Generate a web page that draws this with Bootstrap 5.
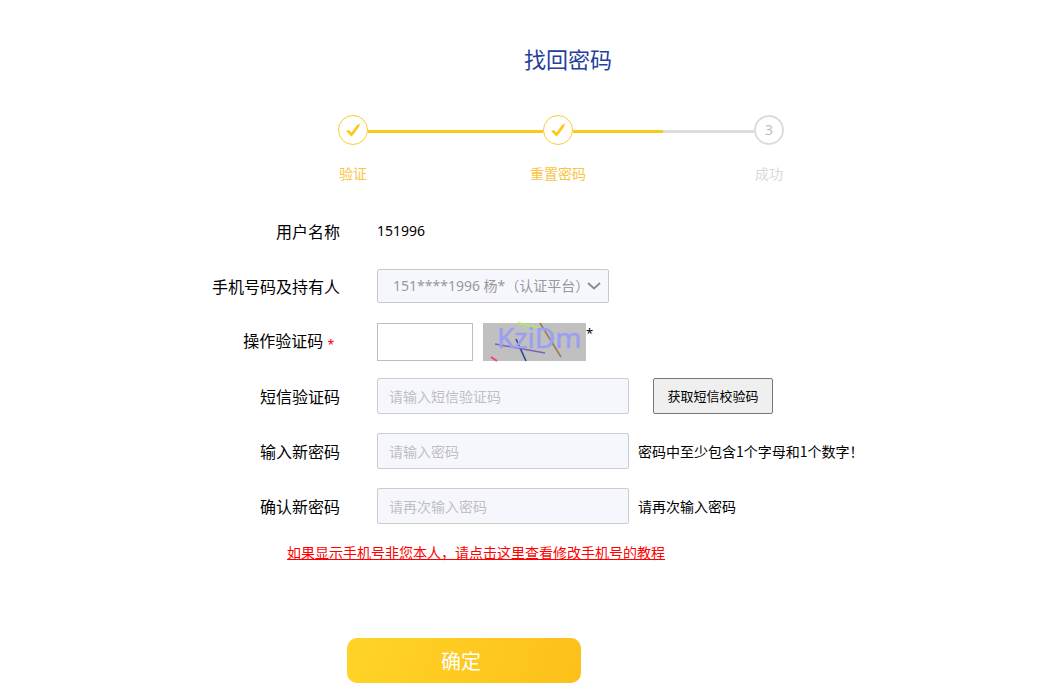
<!DOCTYPE html>
<html lang="zh-CN">
<head>
<meta charset="utf-8">
<meta name="viewport" content="width=device-width, initial-scale=1">
<title>找回密码</title>
<link href="https://cdn.jsdelivr.net/npm/bootstrap@5.3.0/dist/css/bootstrap.min.css" rel="stylesheet">
<style>
  body { font-family: "Noto Sans", "Noto Sans CJK SC", sans-serif; font-size: 14px; line-height: 20px; color: #000; background: #fff; }
  .page { padding-left: 81px; }
  .recover { max-width: 714px; }
  .recover h1 { padding-top: 42px; font-size: 22px; line-height: 32px; font-weight: 400; color: #25409c; }
  .cjk { font-family: "Noto Sans CJK SC", sans-serif; font-weight: 400; }
  /* progress steps */
  .steps { width: 446px; margin: 41px 0 0 127px; }
  .step { width: 30px; color: #fac443; }
  .step-label { margin-top: 18px; }
  .step-dot { width: 30px; height: 30px; border: 1px solid #fccb2e; }
  .step.todo { color: #d8d8d8; }
  .step.todo .step-dot { border: 2px solid #dcdcdc; color: #bfbfbf; }
  .step-line { height: 3px; margin-top: 15px; background: #fdc918; }
  .line-a { flex: 29 1 0; }
  .line-b { flex: 30 1 0; background: linear-gradient(to right, #fdc918 50%, #dcdcdc 50%); }
  /* form */
  .form-rows { margin-top: 20px; }
  .form-line { min-height: 55px; }
  .line-label { width: 129px; margin-right: 37px; font-size: 16px; line-height: 24px; }
  .required { padding: 0 6px 0 1px; font: 16px/20px "Liberation Sans", sans-serif; color: #f00; vertical-align: -4px; }
  .captcha-line { padding-top: 2px; }
  .field { width: 252px; height: 36px; padding: 0 11px; font-size: 14px; border: 1px solid #ccc; border-radius: 2px; background: #f6f7fd; }
  .field::placeholder { color: #bfbfbf; opacity: 1; }
  .phone { width: 232px; height: 34px; padding: 0 24px 0 15px; font-size: 14px; line-height: 20px; border: 1px solid #c8c8cd; border-radius: 2px; opacity: 1;
    background-image: url("data:image/svg+xml,%3Csvg xmlns='http://www.w3.org/2000/svg' viewBox='0 0 14 8'%3E%3Cpath d='M1 1l6 5.5 6-5.5' fill='none' stroke='%238c8c8c' stroke-width='2'/%3E%3C/svg%3E"); background-size: 14px 8px; background-position: right 7px center; }
  .phone:disabled { background-color: #f6f7fd; color: #999; }
  .captcha-field { width: 96px; height: 38px; border: 1px solid #bdbdbd; border-radius: 0; }
  .captcha-btn { margin-left: 10px; line-height: 0; }
  .captcha-note { padding-top: 8px; font-size: 13px; }
  .sms { width: 120px; height: 36px; margin-left: 24px; font-size: 13px; line-height: 20px; color: #000; background: #efefef; border: 1px solid #767676; border-radius: 2px; }
  .hint { margin-left: 9px; }
  .guide { margin: 9px 0 0 76px; color: #f00; }
  .guide:hover { color: #c00; }
  .confirm { width: 234px; height: 45px; margin: 75px 0 6px 136px; padding: 0 6px 0 0; font-size: 20px; line-height: 28px; color: #fff; border: 0; border-radius: 10px; background: linear-gradient(110deg, #ffd426, #fdc01a); }
</style>
</head>
<body>
<div class="page">
<main class="recover mx-auto">
  <h1 class="cjk text-center mb-0">找回密码</h1>

  <div class="steps d-flex align-items-start">
    <div class="step d-flex flex-column align-items-center">
      <span class="step-dot rounded-circle d-flex align-items-center justify-content-center">
        <svg width="16" height="16" viewBox="0 0 16 16" aria-hidden="true"><path d="M1 9l3-1 2.500 2.500L12 3l3-1.500-1 3.500-6 8-1.500 1.500z" fill="#fdc81a"/></svg>
      </span>
      <span class="step-label cjk text-nowrap">验证</span>
    </div>
    <div class="step-line line-a"></div>
    <div class="step d-flex flex-column align-items-center">
      <span class="step-dot rounded-circle d-flex align-items-center justify-content-center">
        <svg width="16" height="16" viewBox="0 0 16 16" aria-hidden="true"><path d="M1 9l3-1 2.500 2.500L12 3l3-1.500-1 3.500-6 8-1.500 1.500z" fill="#fdc81a"/></svg>
      </span>
      <span class="step-label cjk text-nowrap">重置密码</span>
    </div>
    <div class="step-line line-b"></div>
    <div class="step todo d-flex flex-column align-items-center">
      <span class="step-dot rounded-circle d-flex align-items-center justify-content-center">3</span>
      <span class="step-label cjk text-nowrap">成功</span>
    </div>
  </div>

  <form class="form-rows">
    <div class="form-line d-flex align-items-center">
      <label class="line-label cjk text-end" for="user">用户名称</label>
      <output id="user">151996</output>
    </div>
    <div class="form-line d-flex align-items-center">
      <label class="line-label cjk text-end" for="phone">手机号码及持有人</label>
      <select class="form-select phone" id="phone" disabled><option>151****1996 杨*（认证平台）</option></select>
    </div>
    <div class="form-line captcha-line d-flex align-items-center">
      <label class="line-label cjk text-end" for="captcha">操作验证码 <span class="required">*</span></label>
      <input class="form-control captcha-field" id="captcha" type="text">
      <button class="captcha-btn btn p-0 border-0 rounded-0" type="button" aria-label="刷新验证码">
        <svg class="overflow-visible" width="103" height="38" viewBox="0 0 103 38">
          <rect width="103" height="38" fill="#c0c0c0"/>
          <path d="M35 0L69 8" stroke="#aee571" stroke-width="2"/>
          <path d="M57 0L78 34" stroke="#9c7a4a" stroke-width="1.500"/>
          <path d="M33 16L43 38" stroke="#253a99" stroke-width="1.500"/>
          <path d="M8 34L14 38" stroke="#ef3f91" stroke-width="2"/>
          <path d="M12 21L62 30" stroke="#7b62b3" stroke-width="1.500"/>
          <text x="14" y="25" font-size="28" font-family="Noto Sans, sans-serif" fill="#9a9ff2" stroke="#9a9ff2" stroke-width="0.500">KziDm</text>
        </svg>
      </button>
      <span class="captcha-note align-self-start">*</span>
    </div>
    <div class="form-line d-flex align-items-center">
      <label class="line-label cjk text-end" for="sms">短信验证码</label>
      <input class="form-control field cjk" id="sms" type="text" placeholder="请输入短信验证码">
      <button class="btn sms cjk p-0" type="button">获取短信校验码</button>
    </div>
    <div class="form-line d-flex align-items-center">
      <label class="line-label cjk text-end" for="pw">输入新密码</label>
      <input class="form-control field cjk" id="pw" type="password" placeholder="请输入密码">
      <span class="hint cjk text-nowrap">密码中至少包含1个字母和1个数字！</span>
    </div>
    <div class="form-line d-flex align-items-center">
      <label class="line-label cjk text-end" for="pw2">确认新密码</label>
      <input class="form-control field cjk" id="pw2" type="password" placeholder="请再次输入密码">
      <span class="hint cjk text-nowrap">请再次输入密码</span>
    </div>
    <a class="guide cjk d-inline-block text-decoration-underline" href="#">如果显示手机号非您本人，请点击这里查看修改手机号的教程</a>
    <button class="btn confirm cjk d-block" type="submit">确定</button>
  </form>
</main>
</div>
<script src="https://cdn.jsdelivr.net/npm/bootstrap@5.3.0/dist/js/bootstrap.bundle.min.js"></script>
</body>
</html>
